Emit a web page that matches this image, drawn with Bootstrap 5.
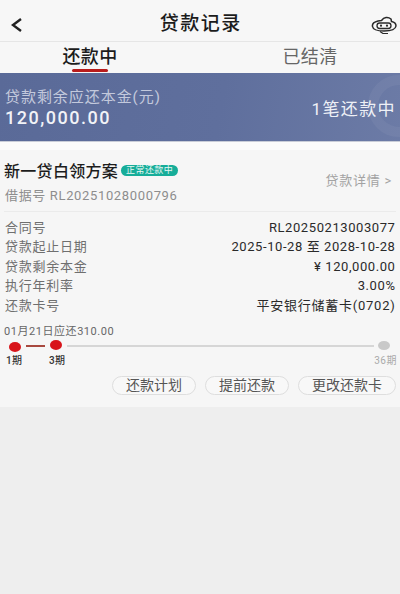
<!DOCTYPE html>
<html lang="zh-CN">
<head>
<meta charset="utf-8">
<meta name="viewport" content="width=device-width, initial-scale=1">
<link href="https://cdn.jsdelivr.net/npm/bootstrap@5.3.0/dist/css/bootstrap.min.css" rel="stylesheet">
<style>
html,body{height:100%;}
body{background:#eeeeee;font-family:"Roboto","Noto Sans CJK SC",sans-serif;color:#222;overflow:hidden;}
.top-bar{height:42px;background:#f7f7f7;border-bottom:1px solid #e6e6e6;padding:8px 3px 0 10px;}
.top-side{width:30px;}
.top-side-r{width:37px;}
.top-title{font-size:19px;font-weight:500;letter-spacing:1.5px;margin-right:-1.5px;color:#1c1c1c;}
.tab-bar{height:31px;background:#f7f7f7;padding:0 30px;}
.tab-item{display:block;width:120px;font-size:18px;letter-spacing:.4px;color:#666;line-height:30px;position:relative;text-align:center;}
.tab-on{color:#1c1c1c;font-weight:500;}
.tab-on::after{content:"";position:absolute;left:50%;margin-left:-18px;bottom:1px;width:36px;height:3px;border-radius:2px;background:#b81c1c;}
.banner{height:69px;background:linear-gradient(100deg,#5a6a98 0%,#5f6f9d 55%,#6c7ba6 100%);padding:4px 5px 0;color:#fff;border-bottom:1px solid #c9cdd8;position:relative;overflow:hidden;}
.banner-label{font-size:15px;letter-spacing:.95px;color:#c3c9dc;line-height:18px;}
.banner-num{font-size:18px;font-weight:500;letter-spacing:1.5px;line-height:24px;color:#f2f3f7;}
.banner-right{font-size:17px;letter-spacing:1.4px;color:#eef0f6;margin-right:-1px;padding-top:2px;}
.banner-mark{position:absolute;right:-30px;top:2px;width:62px;height:62px;border-radius:50%;border:10px solid rgba(255,255,255,.05);}
.gap-strip{height:8px;background:#fbfbfb;}
.loan-card{background:#f6f6f6;height:257px;padding:0 4px;}
.loan-head{height:62px;border-bottom:1px solid #ebebeb;padding-top:3px;}
.loan-name{font-size:16px;font-weight:500;letter-spacing:.3px;color:#1c1c1c;}
.status-pill{font-size:9px;letter-spacing:.4px;background:#16ad99;color:#e6f6f3;border-radius:6px;line-height:11px;padding:0 5px;margin-left:3px;margin-top:-3px;}
.loan-no{font-size:13px;letter-spacing:.65px;color:#8d8d8d;line-height:18px;margin-top:3px;padding-left:1px;}
.detail-link{font-size:13px;letter-spacing:.75px;color:#a3a3a3;margin-top:-3px;}
.info-rows{padding-top:6px;}
.info-line{height:19.4px;font-size:13px;line-height:19px;}
.info-key{color:#6f6f6f;letter-spacing:.75px;padding-left:1px;}
.info-val{color:#2a2a2a;letter-spacing:.58px;margin-right:.5px;}
.info-cn{letter-spacing:.75px;}
.due-note{font-size:11px;letter-spacing:.55px;color:#666;margin-top:10px;line-height:14px;}
.track{height:14px;padding:0 6px 0 5px;}
.dot-on{width:12px;height:10px;border-radius:50%;background:#d8141a;flex:none;}
.dot-a{margin-top:2px;}
.dot-b{margin-top:-1px;}
.link-red{width:19px;height:1.5px;background:#a8493f;margin:0 5px;flex:none;}
.link-grey{height:2px;background:#d6d6d6;flex:1;margin:0 4px 0 5px;}
.dot-off{width:12px;height:9px;border-radius:50%;background:#c9c9c9;flex:none;}
.marks{font-size:10px;line-height:12px;margin-top:2px;}
.mark-a{color:#333;font-weight:500;margin-left:2px;width:41px;letter-spacing:.4px;}
.mark-c{color:#aaa;letter-spacing:.5px;margin-right:-1px;}
.act-row{margin-top:9px;gap:9px;}
.pill-act{font-size:14px;letter-spacing:0;line-height:17px;padding:0 13px;border:1px solid #dedede;border-radius:10px;color:#555;background:#f8f8f8;}
</style>
</head>
<body>
<div class="top-bar d-flex align-items-center justify-content-between">
  <div class="top-side"><svg class="d-block" width="14" height="16" viewBox="0 0 14 16"><path d="M11 2 L3 8 L11 14" fill="none" stroke="#222" stroke-width="2.4"/></svg></div>
  <div class="top-title">贷款记录</div>
  <div class="top-side-r d-flex justify-content-end"><svg class="d-block" width="26" height="18" viewBox="0 0 26 18"><path d="M7 5 C3 6 1 8 1.5 10.5 C2 13.5 6 15 13 15 C20 15 24.5 13.5 25 10 C25 7.5 23 6 20.5 5.5 L20 3 C17 .5 13 1 10.500 4.500 Z" fill="none" stroke="#2a2a2a" stroke-width="1.5" stroke-linejoin="round"/><rect x="6" y="7" width="14" height="5.500" rx="2.700" fill="none" stroke="#2a2a2a" stroke-width="1.300"/><circle cx="10" cy="9.700" r="1.100" fill="#2a2a2a"/><circle cx="16" cy="9.700" r="1.100" fill="#2a2a2a"/><path d="M9 15.500 L12 17.500 H17" fill="none" stroke="#2a2a2a" stroke-width="1.200"/></svg></div>
</div>
<div class="tab-bar d-flex justify-content-between">
  <span class="tab-item tab-on">还款中</span>
  <span class="tab-item">已结清</span>
</div>
<div class="banner d-flex align-items-center justify-content-between">
  <div class="banner-mark"></div>
  <div>
    <div class="banner-label">贷款剩余应还本金(元)</div>
    <div class="banner-num">120,000.00</div>
  </div>
  <div class="banner-right">1笔还款中</div>
</div>
<div class="gap-strip"></div>
<div class="loan-card">
  <div class="loan-head d-flex align-items-center justify-content-between">
    <div>
      <div class="d-flex align-items-center"><span class="loan-name">新一贷白领方案</span><span class="status-pill">正常还款中</span></div>
      <div class="loan-no">借据号 RL20251028000796</div>
    </div>
    <div class="detail-link pe-1">贷款详情 &gt;</div>
  </div>
  <div class="info-rows">
    <div class="info-line d-flex justify-content-between"><span class="info-key">合同号</span><span class="info-val">RL20250213003077</span></div>
    <div class="info-line d-flex justify-content-between"><span class="info-key">贷款起止日期</span><span class="info-val">2025-10-28 至 2028-10-28</span></div>
    <div class="info-line d-flex justify-content-between"><span class="info-key">贷款剩余本金</span><span class="info-val">¥ 120,000.00</span></div>
    <div class="info-line d-flex justify-content-between"><span class="info-key">执行年利率</span><span class="info-val">3.00%</span></div>
    <div class="info-line d-flex justify-content-between"><span class="info-key">还款卡号</span><span class="info-val info-cn">平安银行储蓄卡(0702)</span></div>
  </div>
  <div class="due-note">01月21日应还310.00</div>
  <div class="track d-flex align-items-center"><span class="dot-on dot-a"></span><span class="link-red"></span><span class="dot-on dot-b"></span><span class="link-grey"></span><span class="dot-off"></span></div>
  <div class="marks d-flex"><span class="mark-a">1期</span><span class="mark-a">3期</span><span class="mark-c ms-auto">36期</span></div>
  <div class="act-row d-flex justify-content-end">
    <span class="pill-act">还款计划</span><span class="pill-act">提前还款</span><span class="pill-act">更改还款卡</span>
  </div>
</div>
<script src="https://cdn.jsdelivr.net/npm/bootstrap@5.3.0/dist/js/bootstrap.bundle.min.js"></script>
</body>
</html>
